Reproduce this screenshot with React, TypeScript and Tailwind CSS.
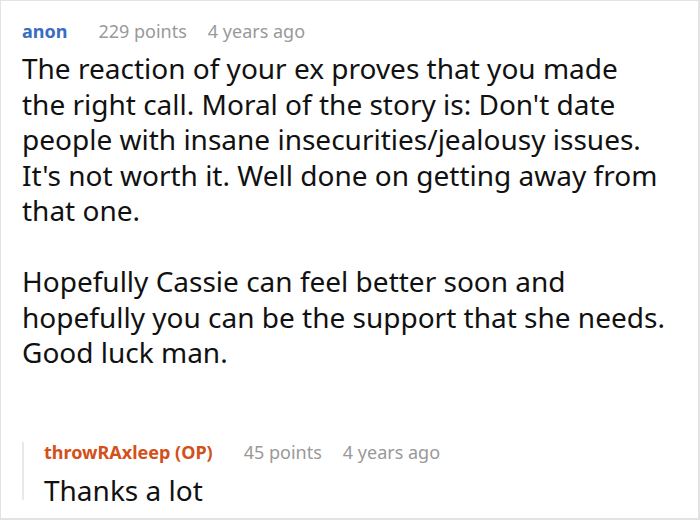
export default function App() {
  return (
    <div
      className="h-[520px] w-[700px] overflow-hidden border-2 border-l border-t border-[#e3e3e3] bg-white"
      style={{ fontFamily: '"Noto Sans", "Open Sans", sans-serif' }}
    >
      <div className="pl-[21px] pt-[16px]">
        <div className="flex items-baseline text-[18px] leading-[28px]">
          <span className="mr-[31px] font-bold text-[#3a6cbf]">anon</span>
          <span className="mr-[21px] text-[#999999]">229 points</span>
          <span className="text-[#999999]">4 years ago</span>
        </div>
        <div className="mt-[6px] whitespace-nowrap text-[28px] leading-[35.5px] text-[#111111]">
          <p>
            The reaction of your ex proves that you made
            <br />
            the right call. Moral of the story is: Don't date
            <br />
            people with insane insecurities/jealousy issues.
            <br />
            It's not worth it. Well done on getting away from
            <br />
            that one.
          </p>
          <p className="mt-[35.5px]">
            Hopefully Cassie can feel better soon and
            <br />
            hopefully you can be the support that she needs.
            <br />
            Good luck man.
          </p>
        </div>
        <div className="mt-[79px] border-l-2 border-[#e8e8e8] pl-[20px]">
          <div className="-mt-[8px] flex items-baseline text-[18px] leading-[20px]">
            <span className="mr-[31px] font-bold text-[#d4501a]">throwRAxleep (OP)</span>
            <span className="mr-[21px] text-[#999999]">45 points</span>
            <span className="text-[#999999]">4 years ago</span>
          </div>
          <p className="mt-[18px] text-[28px] leading-[20px] text-[#111111]">Thanks a lot</p>
        </div>
      </div>
    </div>
  );
}
